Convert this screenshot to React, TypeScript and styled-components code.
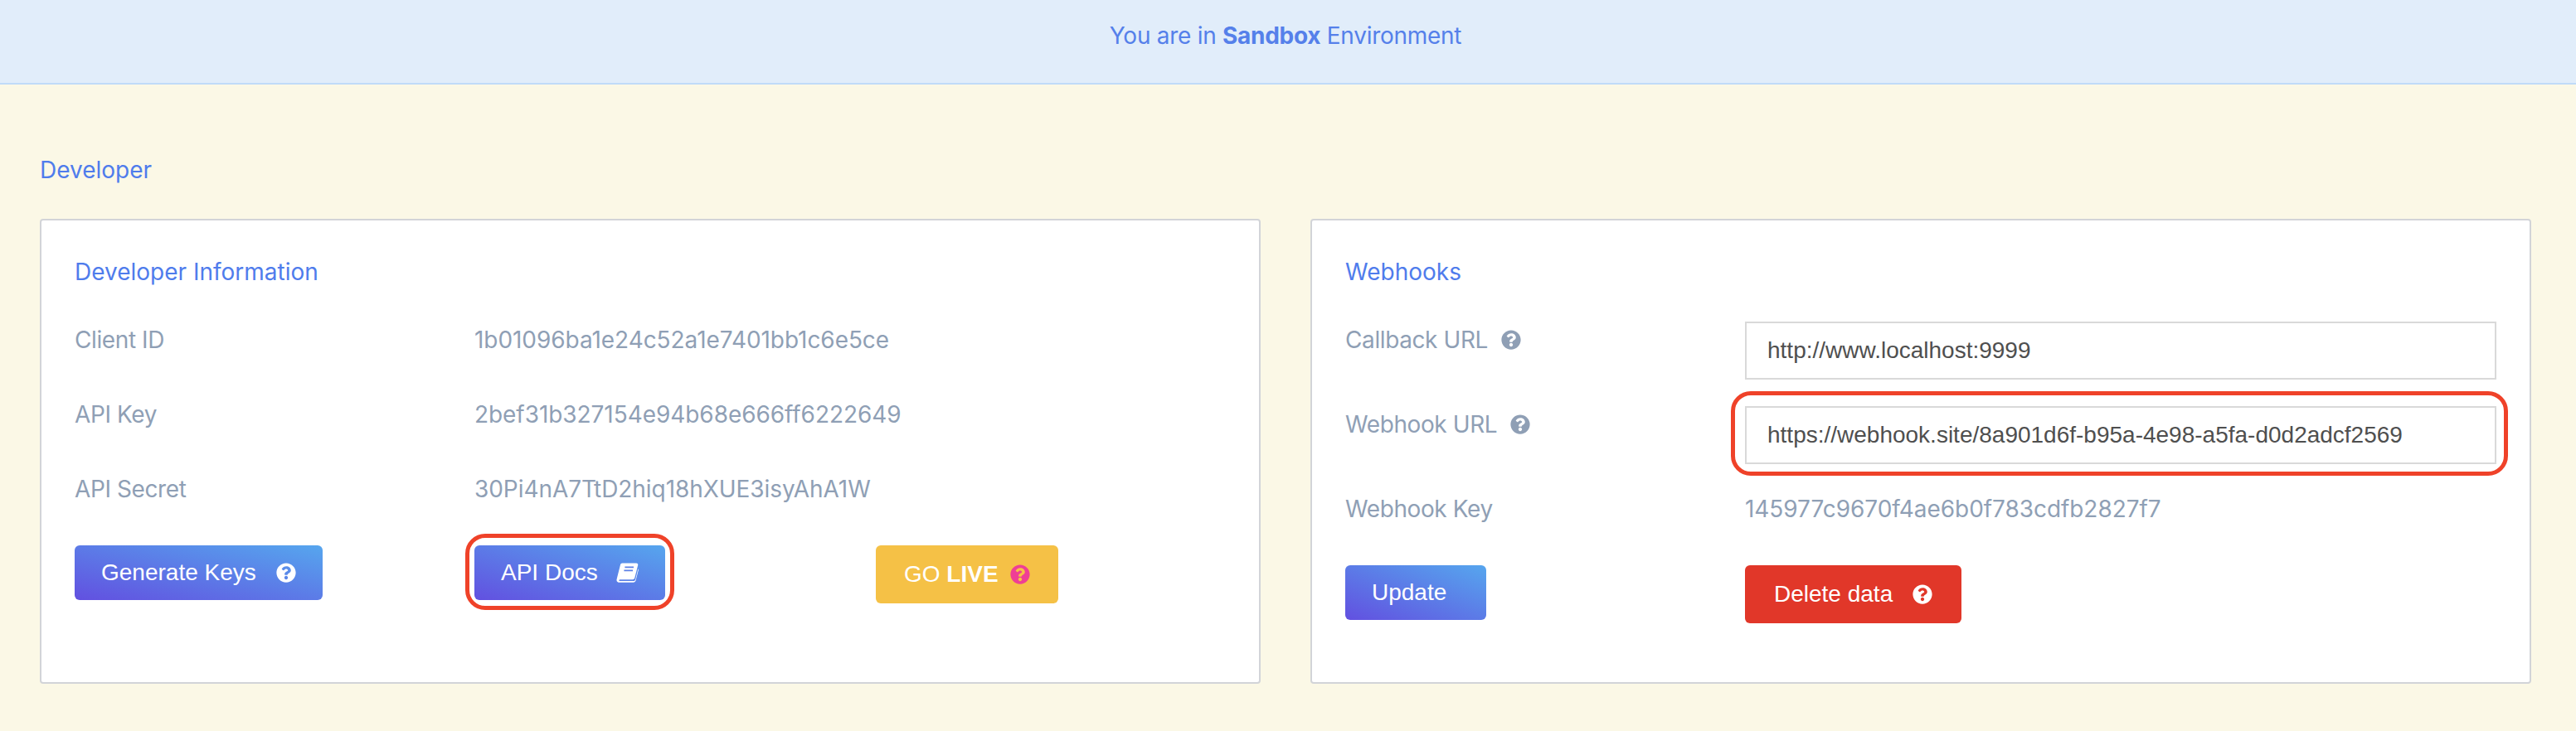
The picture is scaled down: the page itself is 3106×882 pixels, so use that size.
import React from "react";
import styled, { createGlobalStyle } from "styled-components";
import { FaQuestionCircle } from "react-icons/fa";

const GlobalStyle = createGlobalStyle`
  html, body { margin: 0; padding: 0; }
  body {
    background: #fbf8e6;
    font-family: Inter, "Liberation Sans", Arial, sans-serif;
    font-size: 28px;
  }
`;

const Page = styled.div`
  min-height: 882px;
  background: #fbf8e6;
  overflow: hidden;
`;

const Banner = styled.div`
  box-sizing: border-box;
  height: 102px;
  display: flex;
  align-items: center;
  justify-content: center;
  padding: 0 6px 14px 0;
  background: #e1edfa;
  border-bottom: 2px solid #c0dbf8;
  color: #5580ea;
  font-size: 28px;
  letter-spacing: -0.28px;
  b { font-weight: 700; }
`;

const Content = styled.main`
  padding: 82px 54px 0 48px;
`;

const PageTitle = styled.h1`
  margin: 0 0 38px;
  font-size: 28px;
  line-height: 42px;
  font-weight: 400;
  color: #4f7cec;
`;

const Columns = styled.div`
  display: grid;
  grid-template-columns: 1472px 1472px;
  column-gap: 60px;
`;

const Card = styled.section`
  box-sizing: border-box;
  height: 561px;
  padding: 41px 40px 0;
  background: #fff;
  border: 2px solid #d2d4d8;
  border-radius: 4px;
`;

const CardTitle = styled.h2`
  margin: 0 0 39px;
  font-size: 28px;
  line-height: 42px;
  font-weight: 400;
  color: #4f7cec;
`;

const Row = styled.div<{ $input?: boolean }>`
  display: grid;
  grid-template-columns: 482px 1fr;
  margin-bottom: ${(p) => (p.$input ? "32px" : "46px")};
  line-height: 44px;
`;

const Label = styled.div`
  display: flex;
  align-items: center;
  gap: 16px;
  height: 44px;
  color: #8f9fb5;
  letter-spacing: -0.4px;
`;

const HelpIcon = styled(FaQuestionCircle)<{ $color?: string }>`
  flex: none;
  width: 24px;
  height: 24px;
  color: ${(p) => p.$color ?? "#fff"};
`;

const Value = styled.div`
  color: #8f9fb5;
  letter-spacing: -0.06px;
`;

const UrlInput = styled.input`
  box-sizing: border-box;
  display: block;
  width: 906px;
  height: 70px;
  padding: 0 25px;
  background: #fff;
  border: 2px solid #d9d9d9;
  border-radius: 0;
  outline: none;
  font: 28px "Liberation Sans", Arial, sans-serif;
  color: #4f4f4f;
`;

const Annotated = styled.div<{ $t: number; $r: number; $b: number; $l: number; $radius: number }>`
  position: relative;
  width: fit-content;
  &::after {
    content: "";
    position: absolute;
    top: ${(p) => p.$t}px;
    right: ${(p) => p.$r}px;
    bottom: ${(p) => p.$b}px;
    left: ${(p) => p.$l}px;
    border: 5px solid #ef4229;
    border-radius: ${(p) => p.$radius}px;
    pointer-events: none;
  }
`;

const Actions = styled.div<{ $cols: string }>`
  display: grid;
  grid-template-columns: ${(p) => p.$cols};
  align-items: start;
`;

const Button = styled.button<{ $variant?: "primary" | "gold" | "red"; $tall?: boolean; $minWidth?: number; $pad?: number; $gap?: number }>`
  box-sizing: border-box;
  display: inline-flex;
  align-items: center;
  gap: ${(p) => p.$gap ?? 24}px;
  height: ${(p) => (p.$tall ? 70 : 66)}px;
  min-width: ${(p) => p.$minWidth ?? 0}px;
  padding: 0 ${(p) => p.$pad ?? 32}px;
  border: none;
  border-radius: 6px;
  font: 28px "Liberation Sans", Arial, sans-serif;
  color: #fff;
  background: ${(p) =>
    p.$variant === "gold"
      ? "#f5c146"
      : p.$variant === "red"
      ? "#e13729"
      : "linear-gradient(to top right, #6250e0, #56a6ee)"};
  b { font-weight: 700; }
`;

const BookIcon = () => (
  <svg width="27" height="24" viewBox="0 0 27 24" fill="none">
    <path
      fill="#fff"
      d="M7.2 0.6 H24.2 C25.8 0.6 26.6 1.8 26.1 3.3 L22.3 18.3 C21.9 19.6 21 20.2 19.6 20.2 H5.2 C4 20.2 3.3 20.7 3.3 21.2 C3.3 21.8 3.9 22 5 22 H21 C22 22 22.8 21.4 23.1 20.5 L26.4 7.5 L27 8 L23.6 21.3 C23.2 22.8 22.2 23.8 20.6 23.8 H4.2 C1.6 23.8 0 22.3 0.6 20 C0.8 19 1 18.4 1.2 17.6 L5 2.6 C5.3 1.4 6 0.6 7.2 0.6 Z"
    />
    <path stroke="#5c80e6" strokeWidth="1.8" d="M10.4 5.4 H21 M9.4 9.4 H20" />
  </svg>
);

export default function App() {
  return (
    <Page>
      <GlobalStyle />
      <Banner>
        <span>
          You are in <b>Sandbox</b> Environment
        </span>
      </Banner>
      <Content>
        <PageTitle>Developer</PageTitle>
        <Columns>
          <Card>
            <CardTitle>Developer Information</CardTitle>
            <Row>
              <Label>Client ID</Label>
              <Value>1b01096ba1e24c52a1e7401bb1c6e5ce</Value>
            </Row>
            <Row>
              <Label>API Key</Label>
              <Value>2bef31b327154e94b68e666ff6222649</Value>
            </Row>
            <Row>
              <Label>API Secret</Label>
              <Value>30Pi4nA7TtD2hiq18hXUE3isyAhA1W</Value>
            </Row>
            <Actions $cols="482px 484px 1fr">
              <div>
                <Button>
                  Generate Keys
                  <HelpIcon />
                </Button>
              </div>
              <Annotated $t={-14} $r={-11} $b={-12} $l={-11} $radius={24}>
                <Button $gap={22}>
                  API Docs
                  <BookIcon />
                </Button>
              </Annotated>
              <div>
                <Button $variant="gold" $tall $pad={34} $gap={14}>
                  <span>
                    GO <b>LIVE</b>
                  </span>
                  <HelpIcon $color="#ef3f95" />
                </Button>
              </div>
            </Actions>
          </Card>
          <Card>
            <CardTitle>Webhooks</CardTitle>
            <Row $input>
              <Label>
                Callback URL
                <HelpIcon $color="#8f9fb5" />
              </Label>
              <UrlInput readOnly value="http://www.localhost:9999" />
            </Row>
            <Row $input>
              <Label>
                Webhook URL
                <HelpIcon $color="#8f9fb5" />
              </Label>
              <Annotated $t={-18} $r={-14} $b={-14} $l={-17} $radius={24}>
                <UrlInput readOnly value="https://webhook.site/8a901d6f-b95a-4e98-a5fa-d0d2adcf2569" />
              </Annotated>
            </Row>
            <Row>
              <Label>Webhook Key</Label>
              <Value>145977c9670f4ae6b0f783cdfb2827f7</Value>
            </Row>
            <Actions $cols="482px 1fr">
              <div>
                <Button $minWidth={170}>Update</Button>
              </div>
              <div>
                <Button $variant="red" $tall $pad={35}>
                  Delete data
                  <HelpIcon />
                </Button>
              </div>
            </Actions>
          </Card>
        </Columns>
      </Content>
    </Page>
  );
}
